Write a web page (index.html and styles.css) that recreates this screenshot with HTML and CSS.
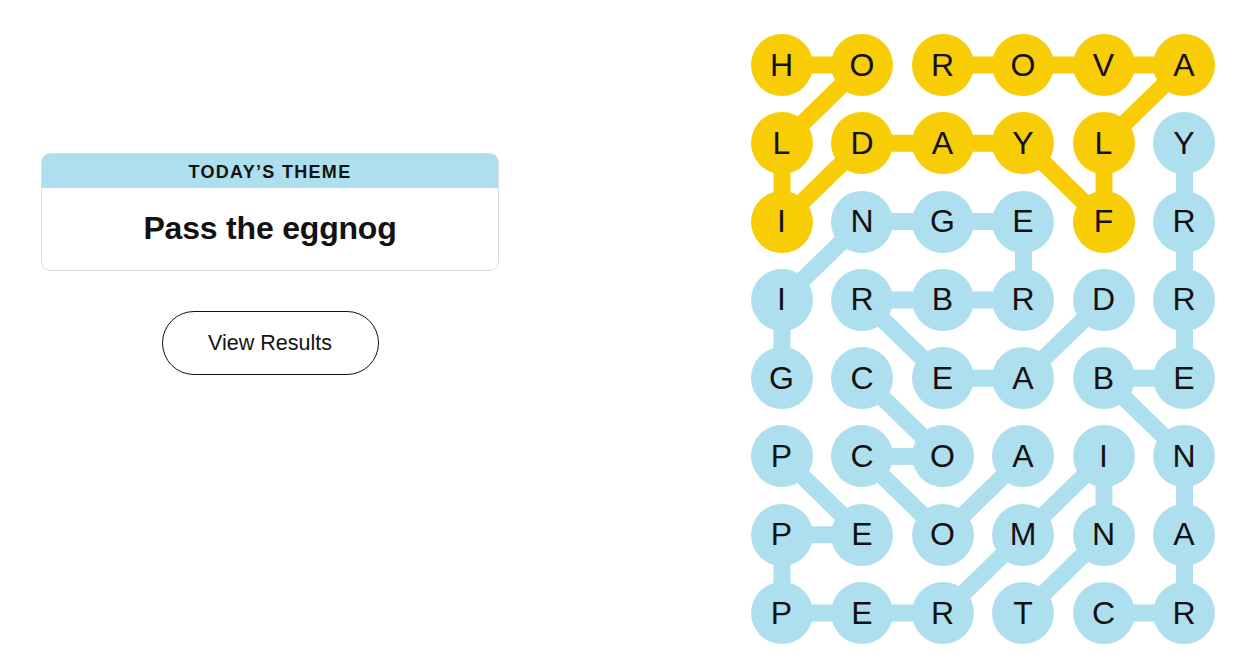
FILE: index.html
```html
<!DOCTYPE html>
<html lang="en">
<head>
  <meta charset="UTF-8">
  <title>Strands - Pass the eggnog</title>
  <link rel="stylesheet" href="styles.css">
</head>
<body>
  <div class="game">
    <div class="side">
      <div class="theme-card">
        <h2 class="theme-label">TODAY’S THEME</h2>
        <p class="theme-text">Pass the eggnog</p>
      </div>
      <button class="results-btn">View Results</button>
    </div>

    <div class="board">
      <svg class="links" viewBox="0 0 464.5 610.1" width="464.5" height="610.1">
        <polyline class="gold-line" points="31,31 111.5,31 31,109.3 31,187.6 111.5,109.3 192,109.3 272.5,109.3 353,187.6 353,109.3 433.5,31 353,31 272.5,31 192,31"/>
        <polyline class="blue-line" points="353,579.1 433.5,579.1 433.5,500.8 433.5,422.5 353,344.2 433.5,344.2 433.5,265.9 433.5,187.6 433.5,109.3"/>
        <polyline class="blue-line" points="31,344.2 31,265.9 111.5,187.6 192,187.6 272.5,187.6 272.5,265.9 192,265.9 111.5,265.9 192,344.2 272.5,344.2 353,265.9"/>
        <polyline class="blue-line" points="111.5,344.2 192,422.5 111.5,422.5 192,500.8 272.5,422.5"/>
        <polyline class="blue-line" points="31,422.5 111.5,500.8 31,500.8 31,579.1 111.5,579.1 192,579.1 272.5,500.8 353,422.5 353,500.8 272.5,579.1"/>
      </svg>

      <button class="cell gold">H</button>
      <button class="cell gold">O</button>
      <button class="cell gold">R</button>
      <button class="cell gold">O</button>
      <button class="cell gold">V</button>
      <button class="cell gold">A</button>

      <button class="cell gold">L</button>
      <button class="cell gold">D</button>
      <button class="cell gold">A</button>
      <button class="cell gold">Y</button>
      <button class="cell gold">L</button>
      <button class="cell blue">Y</button>

      <button class="cell gold">I</button>
      <button class="cell blue">N</button>
      <button class="cell blue">G</button>
      <button class="cell blue">E</button>
      <button class="cell gold">F</button>
      <button class="cell blue">R</button>

      <button class="cell blue">I</button>
      <button class="cell blue">R</button>
      <button class="cell blue">B</button>
      <button class="cell blue">R</button>
      <button class="cell blue">D</button>
      <button class="cell blue">R</button>

      <button class="cell blue">G</button>
      <button class="cell blue">C</button>
      <button class="cell blue">E</button>
      <button class="cell blue">A</button>
      <button class="cell blue">B</button>
      <button class="cell blue">E</button>

      <button class="cell blue">P</button>
      <button class="cell blue">C</button>
      <button class="cell blue">O</button>
      <button class="cell blue">A</button>
      <button class="cell blue">I</button>
      <button class="cell blue">N</button>

      <button class="cell blue">P</button>
      <button class="cell blue">E</button>
      <button class="cell blue">O</button>
      <button class="cell blue">M</button>
      <button class="cell blue">N</button>
      <button class="cell blue">A</button>

      <button class="cell blue">P</button>
      <button class="cell blue">E</button>
      <button class="cell blue">R</button>
      <button class="cell blue">T</button>
      <button class="cell blue">C</button>
      <button class="cell blue">R</button>
    </div>
  </div>
</body>
</html>
```

FILE: styles.css
```css
body {
  margin: 0;
  background: #fff;
  color: #121212;
  font-family: "Liberation Sans", Arial, sans-serif;
}

.game {
  display: flex;
  justify-content: space-between;
  padding: 34px 35px 0 42px;
}

.side {
  width: 456px;
  padding-top: 119px;
  display: flex;
  flex-direction: column;
  align-items: center;
}

.theme-card {
  width: 100%;
  border: 1px solid #dcdcdc;
  border-radius: 9px;
  overflow: hidden;
  text-align: center;
}

.theme-label {
  margin: 0;
  background: #aedfee;
  height: 34px;
  line-height: 36px;
  font-size: 18px;
  font-weight: bold;
  letter-spacing: 1.3px;
}

.theme-text {
  margin: 0;
  height: 82px;
  line-height: 80px;
  font-size: 32px;
  font-weight: bold;
  letter-spacing: -0.2px;
}

.results-btn {
  margin-top: 40px;
  width: 217px;
  height: 64px;
  border: 1px solid #121212;
  border-radius: 32px;
  background: #fff;
  color: #121212;
  font-family: inherit;
  font-size: 21.5px;
  cursor: pointer;
}

.board {
  position: relative;
  display: grid;
  grid-template-columns: repeat(6, 62px);
  grid-auto-rows: 62px;
  column-gap: 18.5px;
  row-gap: 16.3px;
}

.links {
  position: absolute;
  left: 0;
  top: 0;
  z-index: 0;
}

.links polyline {
  fill: none;
  stroke-width: 17;
  stroke-linejoin: round;
}

.gold-line {
  stroke: #f8cd05;
}

.blue-line {
  stroke: #aedfee;
}

.cell {
  position: relative;
  z-index: 1;
  width: 62px;
  height: 62px;
  padding: 0;
  border: none;
  border-radius: 50%;
  font-family: inherit;
  font-size: 32px;
  color: #121212;
  cursor: pointer;
}

.gold {
  background: #f8cd05;
}

.blue {
  background: #aedfee;
}
```
